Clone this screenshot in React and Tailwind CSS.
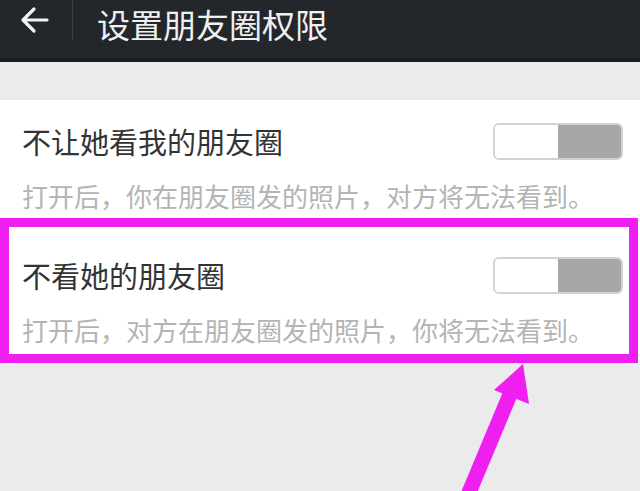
import React from "react";

const font = { fontFamily: '"Noto Sans CJK SC", "Noto Sans", sans-serif' };

function Toggle() {
  return (
    <div className="flex h-[37px] w-[130px] overflow-hidden rounded-[6px] border-2 border-[#d2d2d2] bg-white">
      <div className="w-[63px] bg-white" />
      <div className="flex-1 bg-[#a7a7a7]" />
    </div>
  );
}

export default function App() {
  return (
    <div className="relative h-[491px] w-[640px] overflow-hidden bg-[#ebebeb]" style={font}>
      {/* top bar */}
      <div className="flex h-[62px] items-start border-b-[4px] border-[#1b1e21] bg-[#23272b]">
        <div className="flex h-[40px] w-[73px] items-center justify-center border-r border-[#3a3f44]">
          <svg width="32" height="32" viewBox="0 0 32 32" className="ml-[-2px]">
            <path d="M28 16H5M15 5L4 16l11 11" fill="none" stroke="#f2f2f2" strokeWidth="3.2" strokeLinecap="round" strokeLinejoin="round" />
          </svg>
        </div>
        <div className="ml-[24px] whitespace-nowrap text-[33px] leading-normal text-[#f0f0f0]">设置朋友圈权限</div>
      </div>

      <div className="h-[38px]" />

      <div className="bg-white">
        {/* row 1 */}
        <div className="pl-[22px] pr-[17px] pt-[23px] pb-[7px]">
          <div className="flex h-[37px] items-center justify-between">
            <span className="text-[29px] leading-none text-[#333333]">不让她看我的朋友圈</span>
            <Toggle />
          </div>
          <div className="mt-[21px] whitespace-nowrap text-[26px] leading-[30px] text-[#b4b4b4]">打开后，你在朋友圈发的照片，对方将无法看到。</div>
        </div>

        {/* row 2, highlighted */}
        <div className="mr-[2px] border-[9px] border-[#ee1ff0] pl-[13px] pr-[6px] pt-[30px] pb-[9px]">
          <div className="flex h-[37px] items-center justify-between">
            <span className="text-[29px] leading-none text-[#333333]">不看她的朋友圈</span>
            <Toggle />
          </div>
          <div className="mt-[21px] whitespace-nowrap text-[26px] leading-[30px] text-[#b4b4b4]">打开后，对方在朋友圈发的照片，你将无法看到。</div>
        </div>
      </div>

      {/* annotation arrow */}
      <svg className="pointer-events-none absolute left-0 top-0" width="640" height="491" viewBox="0 0 640 491">
        <path d="M468 495 L514 385" stroke="#ee1ff0" strokeWidth="15" fill="none" />
        <polygon points="523,364 494,390 529,404" fill="#ee1ff0" />
      </svg>
    </div>
  );
}
